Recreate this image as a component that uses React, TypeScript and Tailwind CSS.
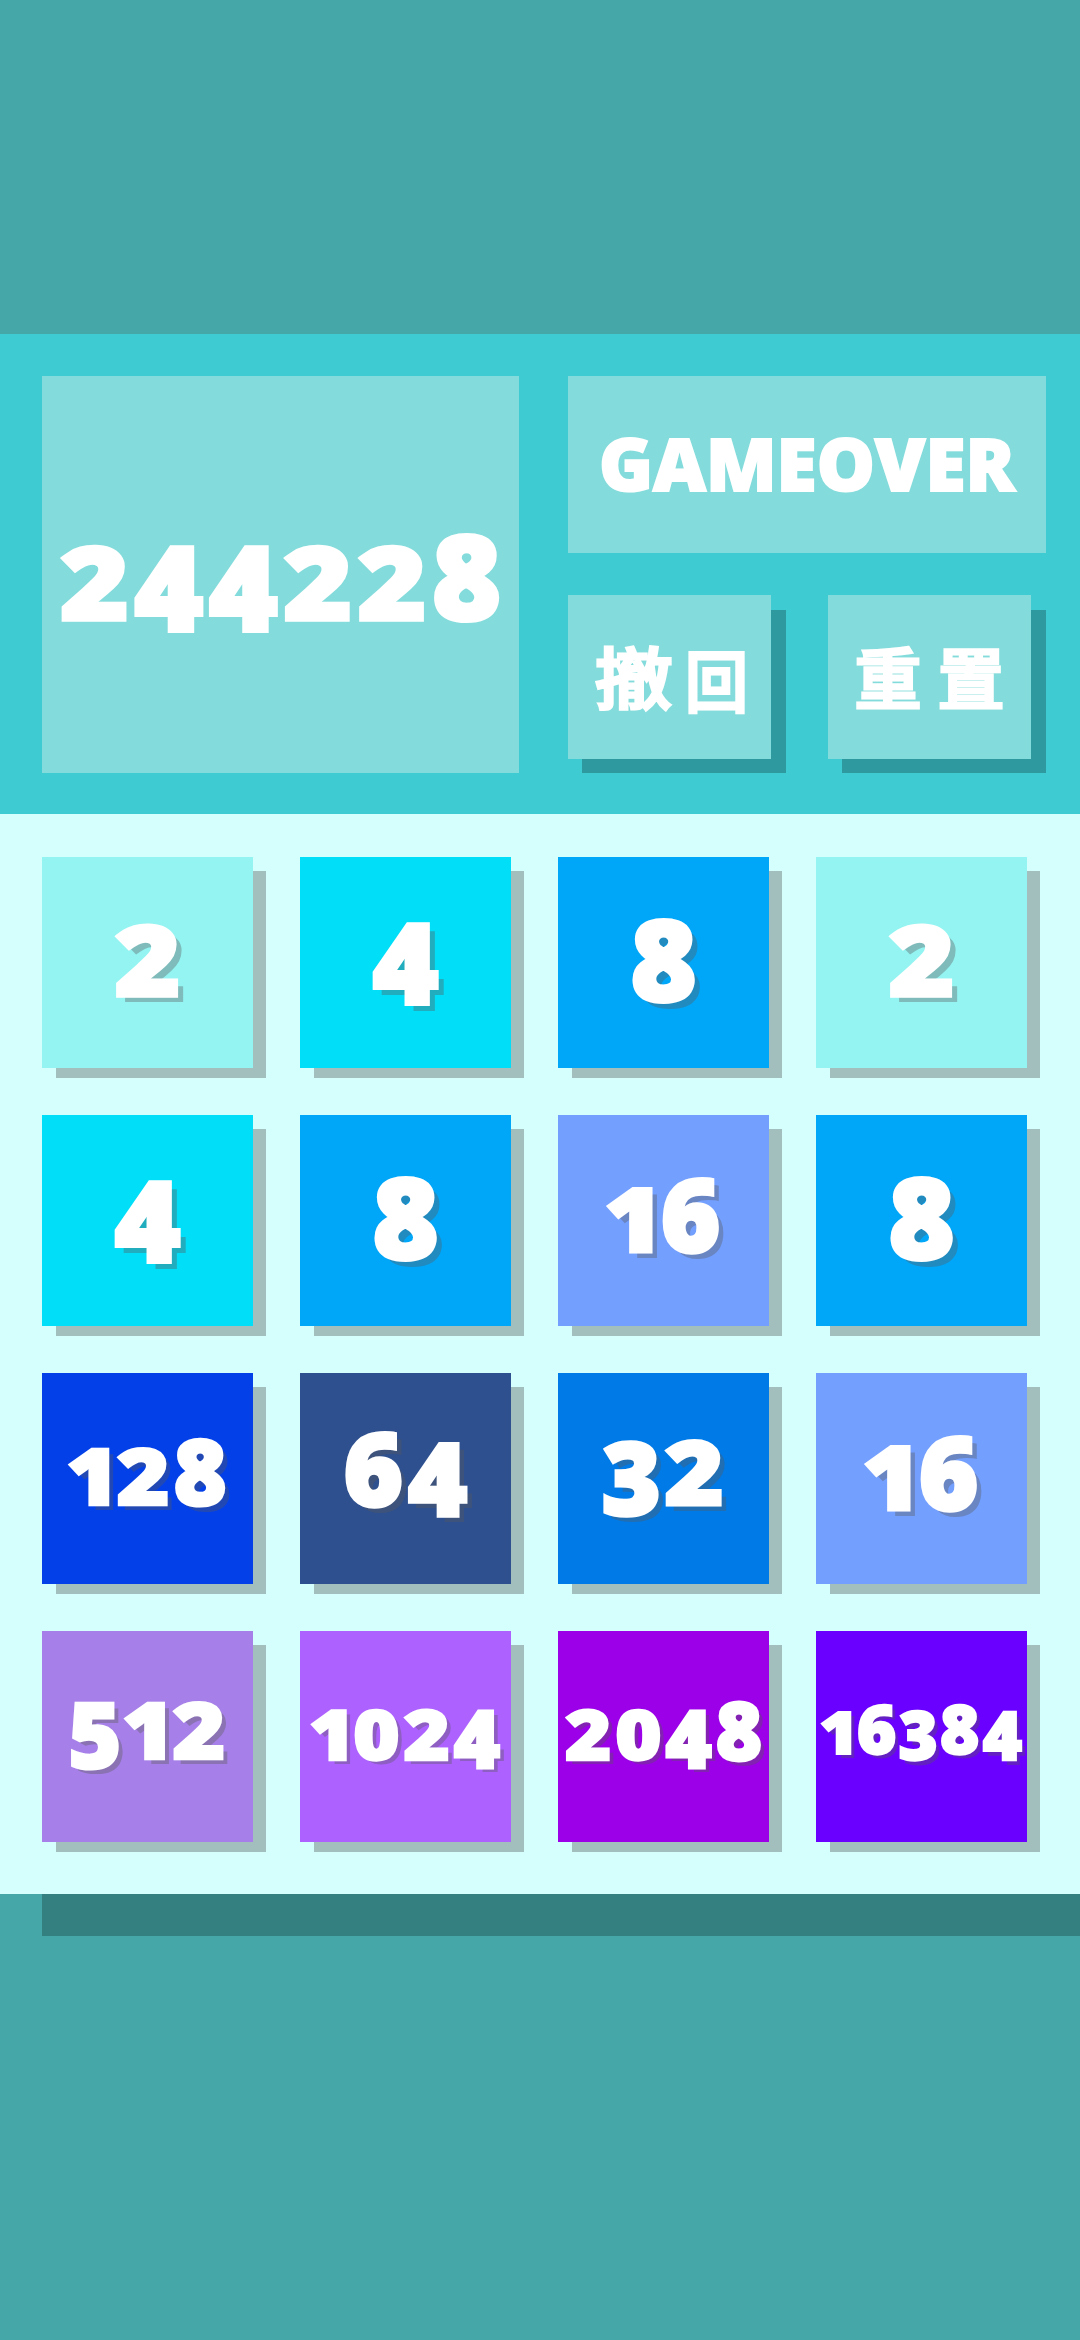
import React from "react";

// Define the shape of a board tile
interface TileItem {
  id: number;
  value: string;
  color: string;
  text: string;
}

const tiles: TileItem[] = [
  { id: 1, value: "2", color: "bg-[#93f4f2]", text: "text-[112px] -translate-y-[10px]" },
  { id: 2, value: "4", color: "bg-[#00def8]", text: "text-[112px] -translate-y-[13px]" },
  { id: 3, value: "8", color: "bg-[#00a7f9]", text: "text-[112px] -translate-y-[5px]" },
  { id: 4, value: "2", color: "bg-[#93f4f2]", text: "text-[112px] -translate-y-[10px]" },
  { id: 5, value: "4", color: "bg-[#00def8]", text: "text-[112px] -translate-y-[13px]" },
  { id: 6, value: "8", color: "bg-[#00a7f9]", text: "text-[112px] -translate-y-[5px]" },
  { id: 7, value: "16", color: "bg-[#739fff]", text: "text-[101px] -translate-y-[7px]" },
  { id: 8, value: "8", color: "bg-[#00a7f9]", text: "text-[112px] -translate-y-[5px]" },
  { id: 9, value: "128", color: "bg-[#0340e8]", text: "text-[90px] -translate-y-[9px]" },
  { id: 10, value: "64", color: "bg-[#2e508f]", text: "text-[101px] -translate-y-[11px]" },
  { id: 11, value: "32", color: "bg-[#007ae6]", text: "text-[101px] -translate-y-[12px]" },
  { id: 12, value: "16", color: "bg-[#739fff]", text: "text-[101px] -translate-y-[7px]" },
  { id: 13, value: "512", color: "bg-[#a680e8]", text: "text-[90px] -translate-y-[13px]" },
  { id: 14, value: "1024", color: "bg-[#ad61ff]", text: "text-[79px] -translate-y-[7px]" },
  { id: 15, value: "2048", color: "bg-[#9b00e8]", text: "text-[79px] -translate-y-[7px]" },
  { id: 16, value: "16384", color: "bg-[#6a00ff]", text: "text-[67px] -translate-y-[8px]" },
];

// 0-2 are short, 3/4/5/7/9 hang below the baseline, 6 and 8 keep the full height
const digitClass = (digit: string) => {
  if (digit === "1") return "mr-[-0.05em] scale-y-[0.87]";
  if ("02".includes(digit)) return "mx-[0.025em] scale-y-[0.87]";
  if ("35".includes(digit)) return "mx-[0.01em] translate-y-[0.095em]";
  if ("479".includes(digit)) return "mx-[0.025em] translate-y-[0.095em]";
  return "mx-[0.025em]";
};

const Digits = ({ value, className }: { value: string; className: string }) => (
  <div
    className={`flex leading-none font-extrabold [-webkit-text-stroke:0.035em_white] ${className}`}
  >
    {value.split("").map((digit, index) => (
      <span
        key={index}
        className={`inline-block origin-[50%_88.8%] ${digitClass(digit)}`}
      >
        {digit}
      </span>
    ))}
  </div>
);

const Tile = ({ item }: { item: TileItem }) => (
  <div className="relative isolate h-[211px] w-[211px]">
    <div className="absolute top-[14px] right-[-13px] bottom-[-10px] left-[14px] -z-10 bg-[#a2bfbe]" />
    <div className={`flex h-full w-full items-center justify-center ${item.color}`}>
      <Digits
        value={item.value}
        className={`${item.text} [text-shadow:0.062em_0.062em_0_rgba(89,89,89,0.37)]`}
      />
    </div>
  </div>
);

const ActionButton = ({ children }: { children: React.ReactNode }) => (
  <button className="relative isolate h-[164px] w-[203px]">
    <div className="absolute top-[15px] right-[-15px] bottom-[-14px] left-[14px] -z-10 bg-[#2e9a9f]" />
    <div className='flex h-full w-full items-center justify-center bg-[#84dbdb] pb-[6px] font-["Noto_Sans_CJK_SC",sans-serif] text-[67px] leading-none font-medium [-webkit-text-stroke:3px_white] [stroke-linejoin:round]'>
      {children}
    </div>
  </button>
);

const App = () => {
  return (
    <div className='min-h-[2340px] w-[1080px] overflow-hidden bg-[#46a7a8] pt-[334px] font-["Open_Sans",sans-serif] text-white'>
      <div className="flex h-[480px] gap-[49px] bg-[#3ecbd1] pt-[42px] pl-[42px]">
        <div className="flex h-[397px] w-[477px] items-center justify-center bg-[#84dbdb]">
          <Digits value="244228" className="text-[117px]" />
        </div>
        <div className="flex w-[478px] flex-col gap-[42px]">
          <div className="flex h-[177px] items-center justify-center bg-[#84dbdb]">
            <div className="-translate-y-[2px] text-[73px] leading-none font-extrabold [-webkit-text-stroke:2px_white]">
              GAMEOVER
            </div>
          </div>
          <div className="flex gap-[57px]">
            <ActionButton>
              <span className="w-[83px] translate-x-[5px] scale-x-[1.16] text-center">撤</span>
              <span className="w-[83px] translate-x-[5px] translate-y-[3px] scale-x-[0.94] text-center">回</span>
            </ActionButton>
            <ActionButton>
              <span className="w-[83px] text-center">重</span>
              <span className="w-[83px] text-center">置</span>
            </ActionButton>
          </div>
        </div>
      </div>

      <div className="grid h-[1080px] auto-rows-[211px] grid-cols-[repeat(4,211px)] gap-[47px] bg-[#d4fffd] pt-[43px] pl-[42px]">
        {tiles.map((item) => (
          <Tile key={item.id} item={item} />
        ))}
      </div>
      <div className="ml-[42px] h-[42px] bg-[#348080]" />
    </div>
  );
};

export default App;
